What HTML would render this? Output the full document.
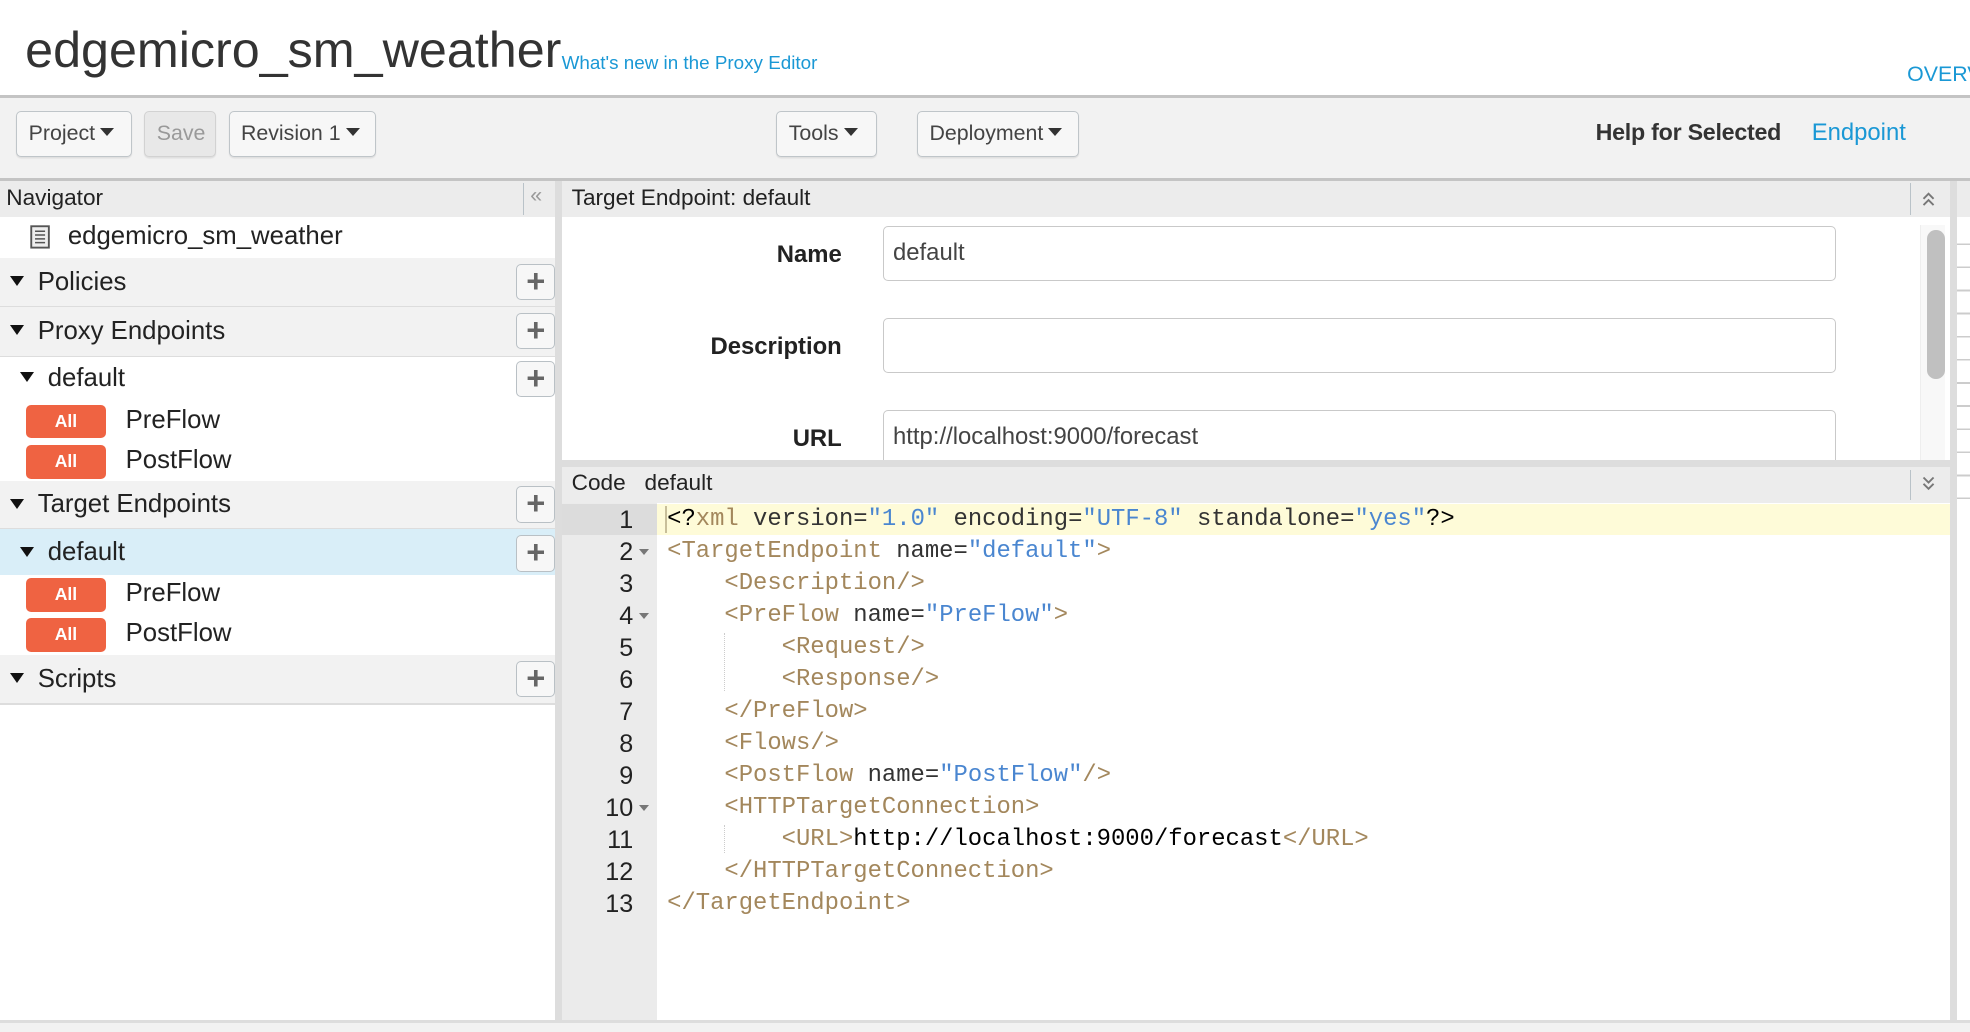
<!DOCTYPE html>
<html><head><meta charset="utf-8"><style>
*{box-sizing:border-box;margin:0;padding:0}
html,body{width:1970px;height:1032px;overflow:hidden;background:#fff}
#z{zoom:1.25638;position:relative;width:1568px;height:822px;font-family:"Liberation Sans",sans-serif;color:#333}
.a{position:absolute}
.btn{position:absolute;top:88px;height:37px;border:1px solid #bfc5c9;border-radius:4px;background:#f7f7f7;font-size:17px;line-height:35px;padding-left:9px;color:#444;box-shadow:0 1px 1px rgba(0,0,0,.08)}
.car{display:inline-block;width:0;height:0;border-left:6px solid transparent;border-right:6px solid transparent;border-top:7px solid #333;vertical-align:middle;margin-left:4px;margin-top:-3px}
.row{position:absolute;left:0;width:442px;font-size:20.5px;color:#222}
.g{background:#f2f2f2;border-bottom:1px solid #ddd}
.tri{position:absolute;width:0;height:0;border-left:6px solid transparent;border-right:6px solid transparent;border-top:8px solid #111}
.plus{position:absolute;left:411px;width:31px;height:29px;border:1px solid #b9c0c5;border-radius:4px;background:#f7f7f7;color:#666;font-size:26px;line-height:25px;text-align:center;font-weight:bold}
.all{position:absolute;left:21px;width:63px;height:27px;background:#ef6342;border-radius:4px;color:#fff;font-size:14px;line-height:27px;text-align:center;font-weight:bold}
.lbl{position:absolute;font-size:19px;font-weight:bold;color:#222;text-align:right;width:200px;left:470px}
.inp{position:absolute;left:703px;width:758px;height:44px;border:1px solid #c9c9c9;border-radius:4px;font-size:19px;padding-left:7px;line-height:42px;color:#444}
.code{position:absolute;left:531px;font-family:"Liberation Mono",monospace;font-size:19px;white-space:pre;line-height:25.5px;color:#333}
.t{color:#a3875c}.s{color:#4a86d0}.k{color:#000}
.ln{position:absolute;left:447px;width:57px;text-align:right;font-family:"Liberation Sans",sans-serif;font-size:20px;line-height:25.5px;color:#222}
.fold{position:absolute;left:509px;width:0;height:0;border-left:4px solid transparent;border-right:4px solid transparent;border-top:5px solid #777}
</style></head><body><div id="z">
<div class="a" style="left:20px;top:17px;font-size:40px;color:#333">edgemicro_sm_weather</div>
<div class="a" style="left:447px;top:41px;font-size:15px;color:#1a98d5">What's new in the Proxy Editor</div>
<div class="a" style="left:1518px;top:49px;font-size:17px;color:#1a98d5">OVERV</div>
<div class="a" style="left:0;top:76px;width:1568px;height:2px;background:#c4c4c4"></div>
<div class="a" style="left:0;top:78px;width:1568px;height:64px;background:#f2f2f2"></div>
<div class="btn" style="left:13px;width:92px">Project<span class="car"></span></div>
<div class="btn" style="left:115px;width:57px;background:#e8e8e8;color:#999;border-color:#d2d2d2">Save</div>
<div class="btn" style="left:182px;width:117px">Revision 1<span class="car"></span></div>
<div class="btn" style="left:618px;width:80px">Tools<span class="car"></span></div>
<div class="btn" style="left:730px;width:129px">Deployment<span class="car"></span></div>
<div class="a" style="left:1270px;top:95px;font-size:18.5px;color:#333;font-weight:bold;letter-spacing:-.2px">Help for Selected</div>
<div class="a" style="left:1442px;top:95px;font-size:19px;color:#1a98d5">Endpoint</div>
<div class="a" style="left:0;top:142px;width:1568px;height:2px;background:#c4c4c4"></div>
<!-- left -->
<div class="a" style="left:0;top:144px;width:442px;height:29px;background:#ececec"></div>
<div class="a" style="left:5px;top:147px;font-size:18px;color:#222">Navigator</div>
<div class="a" style="left:416px;top:146px;width:1px;height:25px;background:#b9c2c8"></div>
<div class="a" style="left:422px;top:146px;font-size:17px;color:#999">«</div>
<div class="a" style="left:442px;top:144px;width:5px;height:678px;background:#ddd"></div>
<div class="row" style="top:173px;height:32px;background:#fff"><svg class="a" style="left:24px;top:6px" width="16" height="19"><rect x="1" y="1" width="14" height="17" fill="#eee" stroke="#555" stroke-width="1.5"/><path d="M4 5h8M4 8h8M4 11h8M4 14h8" stroke="#555" stroke-width="1.2"/></svg><span class="a" style="left:54px;top:4px">edgemicro_sm_weather</span></div>
<div class="row g" style="top:205px;height:39px"><i class="tri" style="left:8px;top:15px"></i><span class="a" style="left:30px;top:8px">Policies</span></div>
<div class="row g" style="top:244px;height:40px"><i class="tri" style="left:8px;top:15px"></i><span class="a" style="left:30px;top:8px">Proxy Endpoints</span></div>
<div class="row" style="top:284px;height:34px"><i class="tri" style="left:16px;top:12px"></i><span class="a" style="left:38px;top:6px">default</span></div>
<div class="all" style="top:322px">All</div><div class="row" style="top:323px;left:100px;width:200px">PreFlow</div>
<div class="all" style="top:354px">All</div><div class="row" style="top:355px;left:100px;width:200px">PostFlow</div>
<div class="row g" style="top:383px;height:38px"><i class="tri" style="left:8px;top:14px"></i><span class="a" style="left:30px;top:7px">Target Endpoints</span></div>
<div class="row" style="top:421px;height:37px;background:#d9eef8"><i class="tri" style="left:16px;top:14px"></i><span class="a" style="left:38px;top:7px">default</span></div>
<div class="all" style="top:460px">All</div><div class="row" style="top:461px;left:100px;width:200px">PreFlow</div>
<div class="all" style="top:492px">All</div><div class="row" style="top:493px;left:100px;width:200px">PostFlow</div>
<div class="row g" style="top:521px;height:40px;border-bottom:2px solid #ddd"><i class="tri" style="left:8px;top:15px"></i><span class="a" style="left:30px;top:8px">Scripts</span></div>
<div class="plus" style="top:210px">+</div>
<div class="plus" style="top:249px">+</div>
<div class="plus" style="top:287px">+</div>
<div class="plus" style="top:387px">+</div>
<div class="plus" style="top:426px">+</div>
<div class="plus" style="top:526px">+</div>
<!-- right top -->
<div class="a" style="left:447px;top:144px;width:1105px;height:29px;background:#ececec"></div>
<div class="a" style="left:455px;top:147px;font-size:18px;color:#222">Target Endpoint: default</div>
<div class="a" style="left:1520px;top:146px;width:1px;height:25px;background:#b9c2c8"></div>
<svg class="a" style="left:1529px;top:151px" width="12" height="14"><path d="M2 7l4-4 4 4M2 12l4-4 4 4" stroke="#777" stroke-width="1.5" fill="none"/></svg>
<div class="lbl" style="top:192px">Name</div>
<div class="inp" style="top:180px">default</div>
<div class="lbl" style="top:265px">Description</div>
<div class="inp" style="top:253px"></div>
<div class="lbl" style="top:338px">URL</div>
<div class="inp" style="top:326px;height:40px;border-bottom:none;border-radius:4px 4px 0 0">http://localhost:9000/forecast</div>
<div class="a" style="left:1528px;top:179px;width:20px;height:187px;background:#f8f8f8;border-left:1px solid #eee"></div>
<div class="a" style="left:1534px;top:183px;width:14px;height:119px;background:#c0c0c0;border-radius:7px"></div>
<div class="a" style="left:447px;top:366px;width:1105px;height:6px;background:#ddd"></div>
<div class="a" style="left:447px;top:372px;width:1105px;height:28px;background:#ececec"></div>
<div class="a" style="left:455px;top:374px;font-size:18px;color:#222">Code&nbsp;&nbsp;&nbsp;default</div>
<div class="a" style="left:1520px;top:374px;width:1px;height:24px;background:#b9c2c8"></div>
<svg class="a" style="left:1529px;top:378px" width="12" height="14"><path d="M2 2l4 4 4-4M2 7l4 4 4-4" stroke="#777" stroke-width="1.5" fill="none"/></svg>
<!-- code -->
<div class="a" style="left:447px;top:400px;width:76px;height:422px;background:#ebebeb"></div>
<div class="a" style="left:447px;top:401px;width:76px;height:25px;background:#dcdcdc"></div>
<div class="a" style="left:523px;top:401px;width:1029px;height:25px;background:#fefbd8"></div>
<div class="a" style="left:529px;top:403px;width:2px;height:21px;background:#c8bf9a"></div>
<div class="ln" style="top:401px">1<br>2<br>3<br>4<br>5<br>6<br>7<br>8<br>9<br>10<br>11<br>12<br>13</div>
<i class="fold" style="top:437px"></i><i class="fold" style="top:488px"></i><i class="fold" style="top:641px"></i>
<div class="a" style="left:576px;top:504px;height:46px;border-left:1px dotted #ccc"></div>
<div class="a" style="left:576px;top:657px;height:22px;border-left:1px dotted #ccc"></div>
<div class="code" style="top:401px"><span class="k">&lt;?</span><span class="t">xml</span> version=<span class="s">"1.0"</span> encoding=<span class="s">"UTF-8"</span> standalone=<span class="s">"yes"</span><span class="k">?&gt;</span>
<span class="t">&lt;TargetEndpoint</span> name=<span class="s">"default"</span><span class="t">&gt;</span>
    <span class="t">&lt;Description/&gt;</span>
    <span class="t">&lt;PreFlow</span> name=<span class="s">"PreFlow"</span><span class="t">&gt;</span>
        <span class="t">&lt;Request/&gt;</span>
        <span class="t">&lt;Response/&gt;</span>
    <span class="t">&lt;/PreFlow&gt;</span>
    <span class="t">&lt;Flows/&gt;</span>
    <span class="t">&lt;PostFlow</span> name=<span class="s">"PostFlow"</span><span class="t">/&gt;</span>
    <span class="t">&lt;HTTPTargetConnection&gt;</span>
        <span class="t">&lt;URL&gt;</span><span class="k">http://localhost:9000/forecast</span><span class="t">&lt;/URL&gt;</span>
    <span class="t">&lt;/HTTPTargetConnection&gt;</span>
<span class="t">&lt;/TargetEndpoint&gt;</span></div>
<!-- right strip -->
<div class="a" style="left:1552px;top:144px;width:6px;height:678px;background:#ddd"></div>
<div class="a" style="left:1558px;top:144px;width:10px;height:29px;background:#ececec"></div>
<div class="a" style="left:1558px;top:177px;width:10px;height:220px;background:repeating-linear-gradient(#fff 0 17px,#ccc 17px 18.4px)"></div>
<div class="a" style="left:0;top:812px;width:1568px;height:2px;background:#ddd"></div>
<div class="a" style="left:0;top:814px;width:1568px;height:8px;background:#f2f2f2"></div>
</div></body></html>
